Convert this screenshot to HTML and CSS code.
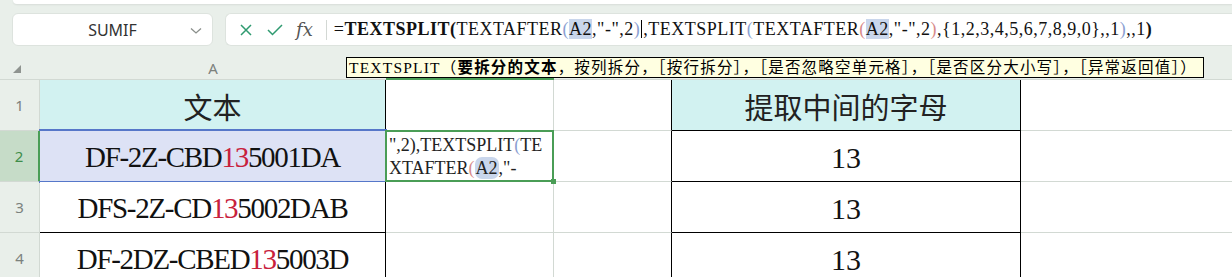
FILE: index.html
```html
<!DOCTYPE html>
<html>
<head>
<title>TEXTSPLIT</title>
<link rel="stylesheet" href="styles.css">
</head>
<body>

<div class="app">
  <div class="ribbon"></div>

  <div class="fbar">
    <div class="namebox">
      <span>SUMIF</span>
      <svg class="chev" width="12" height="8" viewBox="0 0 12 8"><polyline points="1,1.5 6,6 11,1.5" fill="none" stroke="#8a8f8b" stroke-width="1.3"/></svg>
    </div>
    <div class="fbox">
      <div class="ficons">
        <svg width="12" height="12" viewBox="0 0 12 12"><path d="M1 1 L11 11 M11 1 L1 11" stroke="#2f9a70" stroke-width="1.5" fill="none"/></svg>
        <svg width="16" height="12" viewBox="0 0 16 12"><polyline points="1,6 5.5,10.5 15,1" stroke="#2f9a70" stroke-width="1.5" fill="none"/></svg>
        <span class="fx">fx</span>
      </div>
      <div class="fsep"></div>
      <div class="ftext">=<b>TEXTSPLIT(</b>TEXTAFTER<span class="p1">(</span><span class="ref">A2</span>,"-",2<span class="p1">)</span><span class="caret"></span>,TEXTSPLIT<span class="p1">(</span>TEXTAFTER<span class="p2">(</span><span class="ref">A2</span>,"-",2<span class="p2">)</span>,{1,2,3,4,5,6,7,8,9,0},,1<span class="p1">)</span>,,1<b>)</b></div>
    </div>
  </div>

  <div class="sheet">
    <!-- column headers -->
    <div class="ch corner">
      <svg width="10" height="10" viewBox="0 0 10 10"><polygon points="9,1 9,9 1,9" fill="#8f9490"/></svg>
    </div>
    <div class="ch">A</div>
    <div class="ch ch-sel"></div>
    <div class="ch"></div>
    <div class="ch"></div>
    <div class="ch last"></div>

    <!-- row 1 -->
    <div class="rh">1</div>
    <div class="c tb head">文本</div>
    <div class="c"></div>
    <div class="c rb"></div>
    <div class="c tb head">提取中间的字母</div>
    <div class="c last"></div>

    <!-- row 2 -->
    <div class="rh rh-sel">2</div>
    <div class="c tb sel-a">DF-2Z-CBD<span class="red">13</span>5001DA</div>
    <div class="c edit">
      <div class="spill">",2),TEXTSPLIT<span class="p1">(</span>TE<br>XTAFTER<span class="p2">(</span><span class="pill">A2</span>,"-</div>
    </div>
    <div class="c rb"></div>
    <div class="c tb num">13</div>
    <div class="c last"></div>

    <!-- row 3 -->
    <div class="rh">3</div>
    <div class="c tb">DFS-2Z-CD<span class="red">13</span>5002DAB</div>
    <div class="c"></div>
    <div class="c rb"></div>
    <div class="c tb num">13</div>
    <div class="c last"></div>

    <!-- row 4 -->
    <div class="rh">4</div>
    <div class="c tb">DF-2DZ-CBED<span class="red">13</span>5003D</div>
    <div class="c"></div>
    <div class="c rb"></div>
    <div class="c tb num">13</div>
    <div class="c last"></div>

    <div class="tip">TEXTSPLIT（<b>要拆分的文本</b>，按列拆分，［按行拆分］，［是否忽略空单元格］，［是否区分大小写］，［异常返回值］）</div>
  </div>
</div>

</body>
</html>
```

FILE: styles.css
```css
body {
  margin: 0;
  background: #e9efea;
  overflow: hidden;
  font-family: "Noto Sans", sans-serif;
}

.app {
  width: 1232px;
  height: 277px;
  overflow: hidden;
}

.ribbon {
  height: 4px;
  margin-left: 13px;
  background: #fff;
  border-radius: 0 0 0 8px;
  box-shadow: 0 1px 2px rgba(0, 0, 0, 0.08);
}

/* formula bar */
.fbar {
  display: flex;
  gap: 12px;
  padding: 9px 0 0 12px;
  height: 33px;
}

.namebox {
  width: 201px;
  box-sizing: border-box;
  background: #fff;
  border: 1px solid #dde3de;
  border-radius: 6px;
  display: flex;
  align-items: center;
  justify-content: center;
  position: relative;
  font-size: 16px;
  color: #333;
}

.chev {
  position: absolute;
  right: 10px;
  top: 13px;
}

.fbox {
  flex: 1;
  background: #fff;
  border: 1px solid #dde3de;
  border-right: none;
  border-radius: 6px 0 0 6px;
  display: flex;
  align-items: center;
}

.ficons {
  display: flex;
  align-items: center;
  gap: 15px;
  padding-left: 14px;
}

.fx {
  font-family: "DejaVu Serif", serif;
  font-style: italic;
  font-size: 18px;
  color: #555;
  margin-left: -2px;
}

.fsep {
  width: 1px;
  height: 20px;
  background: #d3d8d4;
  margin: 0 7px 0 13px;
}

.ftext {
  font-family: "Liberation Serif", serif;
  font-size: 18px;
  color: #111;
  white-space: nowrap;
  letter-spacing: 0.5px;
}

.ftext b {
  font-weight: bold;
}

.p1 { color: #8c9fd2; }
.p2 { color: #d88b8b; }

.ref {
  background: #c9d6ec;
}

.caret {
  display: inline-block;
  width: 1px;
  height: 18px;
  background: #000;
  vertical-align: -3px;
  margin: 0 1px;
}

/* sheet */
.sheet {
  margin-top: 11px;
  display: grid;
  grid-template-columns: 40px 346px 168px 118px 349px 1fr;
  grid-template-rows: 23px 51px 51px 51px 51px;
  position: relative;
}

.ch {
  box-sizing: border-box;
  border-bottom: 1px solid #d2d9d3;
  color: #7c817d;
  font-size: 15px;
  display: flex;
  align-items: center;
  justify-content: center;
}

.ch.corner {
  justify-content: flex-start;
  padding-left: 12px;
  padding-top: 2px;
}

.ch-sel {
  border-bottom: 2px solid #4a9d56;
}

.rh {
  box-sizing: border-box;
  border-right: 1px solid #d2d9d3;
  border-bottom: 1px solid #d2d9d3;
  color: #7c817d;
  font-size: 15px;
  display: flex;
  align-items: center;
  justify-content: center;
}

.rh-sel {
  background: #c6dcc8;
  color: #3f8d4a;
  border-right: 2px solid #4a9d56;
}

.c {
  box-sizing: border-box;
  background: #fff;
  border-right: 1px solid #d2d9d3;
  border-bottom: 1px solid #d2d9d3;
  position: relative;
  display: flex;
  align-items: center;
  justify-content: center;
  font-family: "Liberation Serif", "Noto Sans CJK SC", serif;
  font-size: 29px;
  color: #111;
  letter-spacing: -1.3px;
  padding-top: 3px;
}

.c.last {
  border-right: none;
}

.tb {
  border-right: 1px solid #000;
  border-bottom: 1px solid #000;
}

.rb {
  border-right: 1px solid #000;
}

.head {
  background: #d2f2f1;
  font-family: "Noto Sans CJK SC", serif;
  font-size: 29px;
  letter-spacing: 0;
  color: #222;
  padding-top: 2px;
}

.num {
  letter-spacing: 0;
  font-size: 30px;
}

.red {
  color: #c8213c;
}

.sel-a {
  background: #dde2f5;
}

.sel-a::after {
  content: "";
  position: absolute;
  left: -1px;
  right: -2px;
  top: -2px;
  bottom: -2px;
  border-top: 2px solid #5677c9;
  border-bottom: 2px solid #5677c9;
}

.edit {
  justify-content: flex-start;
  align-items: flex-start;
  overflow: visible;
  padding-top: 0;
}

.edit::after {
  content: "";
  position: absolute;
  left: -1px;
  right: -1px;
  top: -1px;
  bottom: -1px;
  border: 2px solid #4a9d56;
}

.edit::before {
  content: "";
  position: absolute;
  right: -3px;
  bottom: -3px;
  width: 5px;
  height: 5px;
  background: #4a9d56;
  z-index: 1;
}

.spill {
  font-family: "Liberation Serif", serif;
  font-size: 18px;
  line-height: 23px;
  letter-spacing: 0;
  color: #222;
  padding: 3px 0 0 3px;
  white-space: nowrap;
}

.pill {
  background: #c9d6ec;
  border-radius: 7px;
  padding: 1px 1px;
}

.tip {
  position: absolute;
  left: 346px;
  top: 0;
  width: 858px;
  height: 21px;
  box-sizing: border-box;
  background: #ffffe1;
  border: 1px solid #000;
  font-family: "Liberation Serif", "Noto Sans CJK SC", serif;
  font-size: 15.5px;
  line-height: 19px;
  letter-spacing: 1.2px;
  padding-left: 2px;
  color: #000;
  white-space: nowrap;
  overflow: hidden;
  z-index: 2;
}
```
